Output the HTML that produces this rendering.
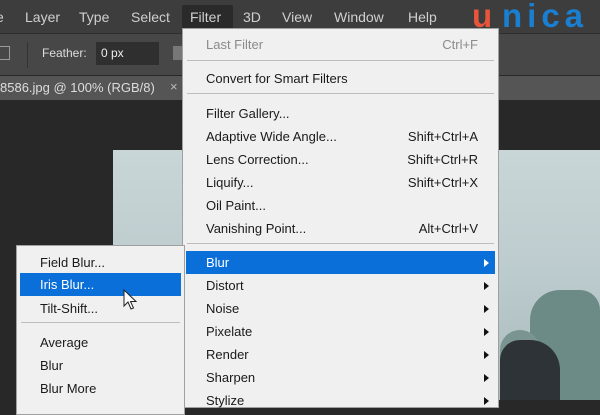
<!DOCTYPE html>
<html><head><style>
*{margin:0;padding:0;box-sizing:border-box}
body{width:600px;height:400px;overflow:hidden;background:#282828;font-family:"Liberation Sans",sans-serif;position:relative}
.a{position:absolute}
.mb{left:0;top:0;width:600px;height:33px;background:#3d3d3d}
.mb span{position:absolute;top:9px;color:#d0d0d0;font-size:14px}
.ob{left:0;top:33px;width:600px;height:42px;background:#474747;border-top:1px solid #2e2e2e}
.tb{left:0;top:76px;width:600px;height:24px;background:#555}
.menu{background:#f0f0f0;border:1px solid #a0a0a0;font-size:13px;color:#1a1a1a}
.it{position:absolute;left:0;right:0;height:23px;line-height:23px}
.it .t{position:absolute;left:23px}
.it .s{position:absolute;right:20px}
.sep{position:absolute;height:1px;background:#bdbdbd}
.hl{background:#0a6fd8;color:#fff}
.arr{position:absolute;right:9px;top:8px;width:0;height:0;border-top:4px solid transparent;border-bottom:4px solid transparent;border-left:5px solid #111}
.logo{position:absolute;top:-3px;font-size:33px;font-weight:bold}
</style></head><body>
<div class="a mb">
<span style="left:-4px">e</span><span style="left:25px">Layer</span><span style="left:79px">Type</span><span style="left:131px">Select</span>
<div class="a" style="left:182px;top:5px;width:51px;height:24px;background:#2a2a2a;border-radius:2px"></div>
<span style="left:190px">Filter</span><span style="left:243px">3D</span><span style="left:282px">View</span><span style="left:334px">Window</span><span style="left:408px">Help</span>
<div class="logo" style="left:472px;color:#e8553b">u</div>
<div class="logo" style="left:502px;color:#1a7fd0;letter-spacing:5px">nica</div>
</div>
<div class="a ob">
<div class="a" style="left:0;top:12px;width:10px;height:14px;border:1px solid #999;border-left:none"></div>
<div class="a" style="left:27px;top:8px;width:1px;height:26px;background:#333"></div>
<div class="a" style="left:42px;top:12px;color:#ddd;font-size:12px">Feather:</div>
<div class="a" style="left:96px;top:8px;width:63px;height:23px;background:#2f2f2f;color:#eee;font-size:12px;padding:4px 5px">0 px</div>
<div class="a" style="left:173px;top:12px;width:10px;height:14px;background:#777"></div>
</div>
<div class="a tb"><div class="a" style="left:0;top:4px;color:#ddd;font-size:13px">8586.jpg @ 100% (RGB/8)</div><div class="a" style="left:170px;top:3px;color:#bbb;font-size:13px">×</div></div>
<div class="a" style="left:113px;top:150px;width:487px;height:250px;background:linear-gradient(180deg,#c9d6d8 0%,#bccbcd 50%,#a9bbbd 100%)"></div>
<div class="a" style="left:530px;top:290px;width:70px;height:110px;background:#6c8a86;border-radius:30px 20px 0 0"></div>
<div class="a" style="left:500px;top:330px;width:40px;height:70px;background:#7a9591;border-radius:20px 20px 0 0"></div>
<div class="a" style="left:500px;top:340px;width:60px;height:60px;background:#2d3336;border-radius:20px 30px 0 0"></div>
<div class="a menu" style="left:182px;top:28px;width:317px;height:380px">
<div class="it" style="top:4px;color:#8a8a8a"><span class="t">Last Filter</span><span class="s">Ctrl+F</span></div>
<div class="sep" style="left:4px;right:4px;top:31px"></div>
<div class="it" style="top:38px"><span class="t">Convert for Smart Filters</span></div>
<div class="sep" style="left:4px;right:4px;top:64px"></div>
<div class="it" style="top:73px"><span class="t">Filter Gallery...</span></div>
<div class="it" style="top:96px"><span class="t">Adaptive Wide Angle...</span><span class="s">Shift+Ctrl+A</span></div>
<div class="it" style="top:119px"><span class="t">Lens Correction...</span><span class="s">Shift+Ctrl+R</span></div>
<div class="it" style="top:142px"><span class="t">Liquify...</span><span class="s">Shift+Ctrl+X</span></div>
<div class="it" style="top:165px"><span class="t">Oil Paint...</span></div>
<div class="it" style="top:188px"><span class="t">Vanishing Point...</span><span class="s">Alt+Ctrl+V</span></div>
<div class="sep" style="left:4px;right:4px;top:214px"></div>
<div class="it hl" style="top:222px;left:3px;right:3px"><span class="t" style="left:20px">Blur</span><div class="arr" style="border-left-color:#fff;right:6px"></div></div>
<div class="it" style="top:245px"><span class="t">Distort</span><div class="arr"></div></div>
<div class="it" style="top:268px"><span class="t">Noise</span><div class="arr"></div></div>
<div class="it" style="top:291px"><span class="t">Pixelate</span><div class="arr"></div></div>
<div class="it" style="top:314px"><span class="t">Render</span><div class="arr"></div></div>
<div class="it" style="top:337px"><span class="t">Sharpen</span><div class="arr"></div></div>
<div class="it" style="top:360px"><span class="t">Stylize</span><div class="arr"></div></div>
</div>
<div class="a menu" style="left:16px;top:245px;width:169px;height:170px">
<div class="it" style="top:5px"><span class="t">Field Blur...</span></div>
<div class="it hl" style="top:27px;left:3px;right:3px"><span class="t" style="left:20px">Iris Blur...</span></div>
<div class="it" style="top:51px"><span class="t">Tilt-Shift...</span></div>
<div class="sep" style="left:4px;right:4px;top:76px"></div>
<div class="it" style="top:85px"><span class="t">Average</span></div>
<div class="it" style="top:108px"><span class="t">Blur</span></div>
<div class="it" style="top:131px"><span class="t">Blur More</span></div>
</div>
<svg class="a" style="left:123px;top:289px" width="16" height="24" viewBox="0 0 16 24"><path d="M1 1 L1 17 L5 13 L8 20 L10.5 19 L7.5 12.5 L13 12.5 Z" fill="#fff" stroke="#222" stroke-width="1"/></svg>
</body></html>
